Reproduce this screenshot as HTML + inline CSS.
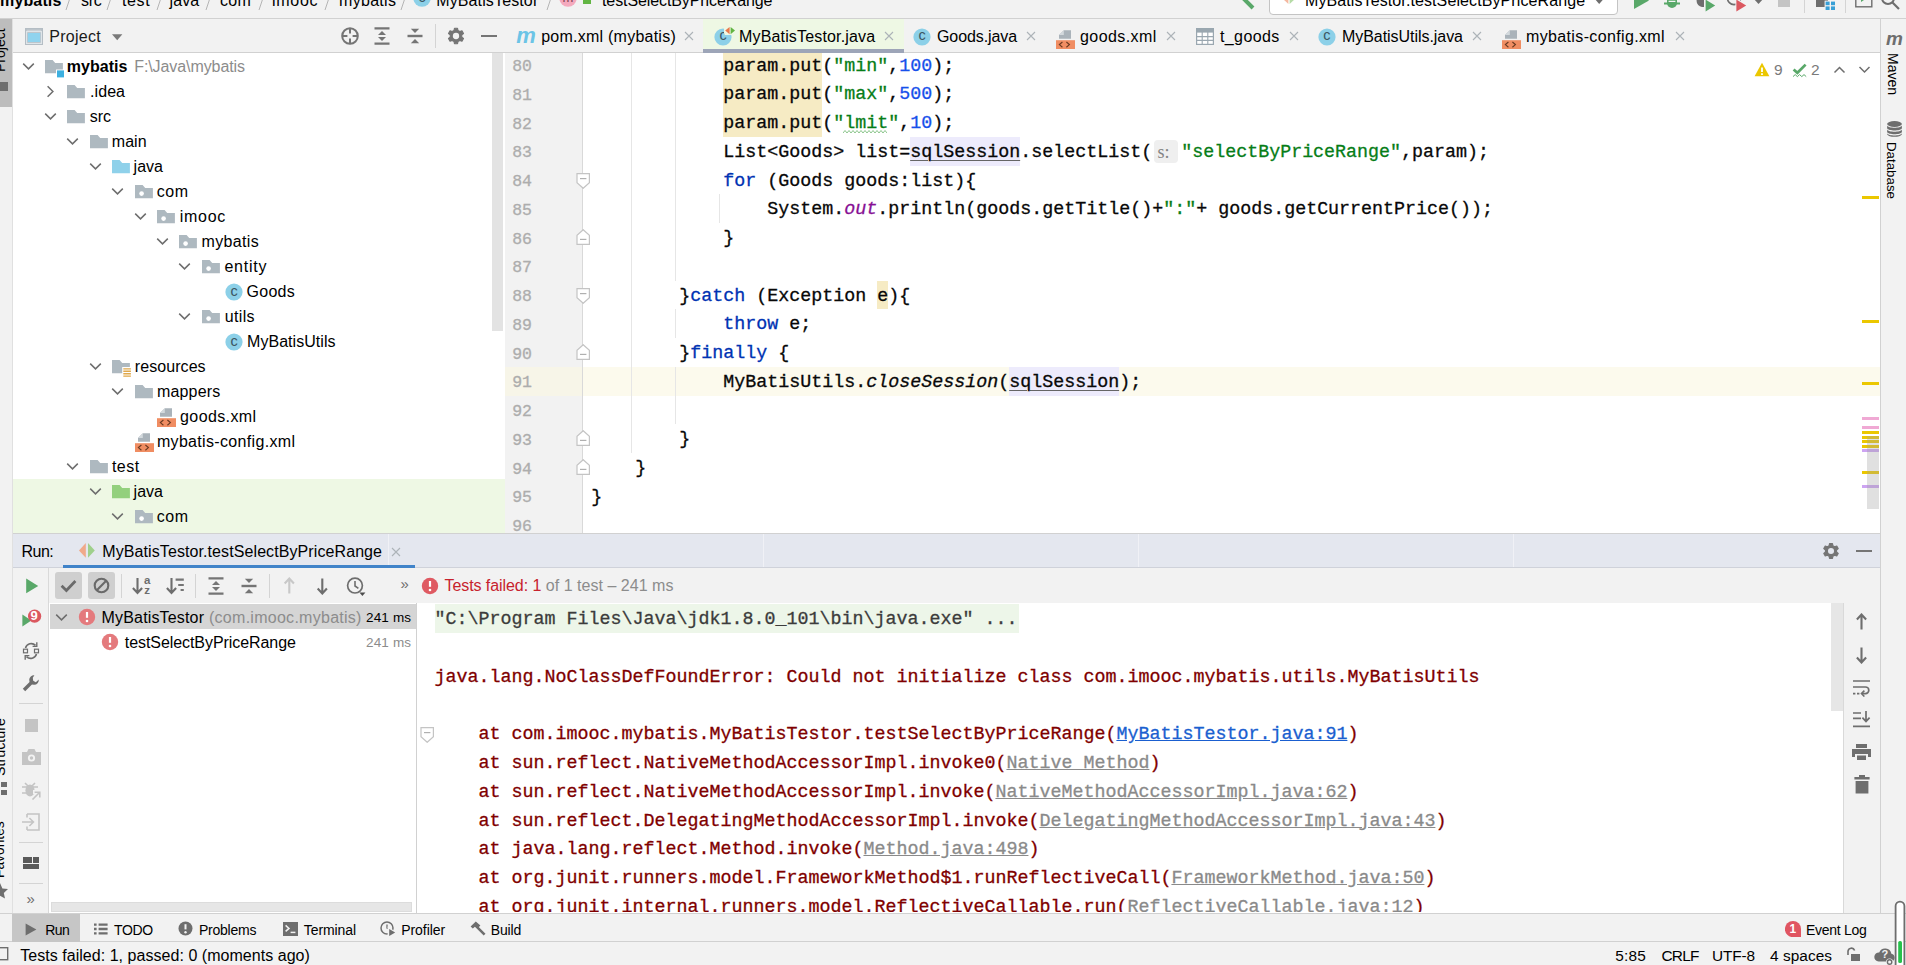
<!DOCTYPE html>
<html lang="en"><head><meta charset="utf-8"><title>mybatis – MyBatisTestor.java</title>
<style>
html,body{margin:0;padding:0;background:#f2f2f2;}
body{width:1906px;height:965px;overflow:hidden;position:relative;font-family:'Liberation Sans',sans-serif;}
#app{position:absolute;left:0;top:0;width:1906px;height:965px;overflow:hidden;}
#app div,#app svg,#app span,#app pre,#app a{position:absolute;}
.t{white-space:pre;line-height:1;}
pre{margin:0;font-family:'Liberation Mono',monospace;font-size:18.333px;line-height:28.75px;height:28.75px;white-space:pre;color:#080808;-webkit-text-stroke:0.3px currentColor;}
pre span, pre a, pre i{position:static !important;}
.k{color:#0033b3}.s{color:#067d17}.n{color:#1750eb}.f{color:#871094;font-style:italic}
.ln{color:#adadad;font-size:16.5px}
.e{color:#7f0000}
.lk{color:#1a5fd0;text-decoration:underline}.lg{color:#8a8a8a;text-decoration:underline}
u{text-decoration:underline;text-decoration-thickness:1px;text-underline-offset:3px;text-decoration-color:#666}
pre i{font-style:italic}
</style></head>
<body><div id="app">
<div style="left:0px;top:0px;width:1906px;height:18px;background:#f2f2f2;"></div>
<div style="left:0px;top:18px;width:1906px;height:1px;background:#d1d1d1;"></div>
<div style="left:0px;top:19px;width:13px;height:946px;background:#f2f2f2;"></div>
<div style="left:0px;top:19px;width:13px;height:88px;background:#bdbdbd;"></div>
<div style="left:13px;top:19px;width:492px;height:34px;background:#f2f2f2;"></div>
<div style="left:13px;top:52px;width:492px;height:1px;background:#d1d1d1;"></div>
<div style="left:13px;top:53px;width:492px;height:480px;background:#fff;"></div>
<div style="left:505px;top:19px;width:1375px;height:34px;background:#f2f2f2;"></div>
<div style="left:505px;top:52px;width:1375px;height:1px;background:#d1d1d1;"></div>
<div style="left:505px;top:53px;width:1375px;height:480px;background:#fff;"></div>
<div style="left:505px;top:53px;width:78px;height:480px;background:#f2f2f2;"></div>
<div style="left:582px;top:53px;width:1px;height:480px;background:#d9d9d9;"></div>
<div style="left:1880px;top:19px;width:1px;height:894px;background:#d1d1d1;"></div>
<div style="left:1881px;top:19px;width:25px;height:894px;background:#f2f2f2;"></div>
<div style="left:13px;top:534px;width:1867px;height:34px;background:#e4e7ef;"></div>
<div style="left:13px;top:533px;width:1867px;height:1px;background:#d1d1d1;"></div>
<div style="left:13px;top:567px;width:1867px;height:1px;background:#cfd2da;"></div>
<div style="left:13px;top:568px;width:1867px;height:35px;background:#f2f2f2;"></div>
<div style="left:49px;top:603px;width:1831px;height:1px;background:#dcdcdc;"></div>
<div style="left:13px;top:603px;width:36px;height:310px;background:#f2f2f2;"></div>
<div style="left:48px;top:568px;width:1px;height:345px;background:#d9d9d9;"></div>
<div style="left:49px;top:603px;width:368px;height:310px;background:#fff;"></div>
<div style="left:416px;top:603px;width:1px;height:310px;background:#d1d1d1;"></div>
<div style="left:417px;top:603px;width:1426px;height:310px;background:#fff;"></div>
<div style="left:1843px;top:603px;width:37px;height:310px;background:#f2f2f2;"></div>
<div style="left:1843px;top:603px;width:1px;height:310px;background:#d9d9d9;"></div>
<div style="left:0px;top:913px;width:1906px;height:1px;background:#d1d1d1;"></div>
<div style="left:0px;top:914px;width:1906px;height:28px;background:#f2f2f2;"></div>
<div style="left:0px;top:941px;width:1906px;height:1px;background:#d1d1d1;"></div>
<div style="left:0px;top:942px;width:1906px;height:23px;background:#f2f2f2;"></div>
<div style="left:12px;top:19px;width:1px;height:894px;background:#e0e0e0;"></div>
<div style="left:505px;top:366.7px;width:1375px;height:29.1px;background:#fcfaed;"></div>
<div style="left:505px;top:366.7px;width:78px;height:29.1px;background:#f7f5e8;"></div>
<div style="left:723px;top:53px;width:99px;height:83.7px;background:#f6ebc4;"></div>
<div style="left:910px;top:136.8px;width:110px;height:28.9px;background:#edebfc;"></div>
<div style="left:876.7px;top:281px;width:11.1px;height:27.6px;background:#f6ebc4;"></div>
<div style="left:1009px;top:366.7px;width:110px;height:29px;background:#edebfc;"></div>
<div style="left:631px;top:53px;width:1px;height:400px;background:#e6e6e6;"></div>
<div style="left:675px;top:53px;width:1px;height:227.5px;background:#e6e6e6;"></div>
<div style="left:675px;top:308.5px;width:1px;height:29px;background:#e6e6e6;"></div>
<div style="left:675px;top:367px;width:1px;height:57px;background:#e6e6e6;"></div>
<div style="left:719px;top:194px;width:1px;height:28.5px;background:#e6e6e6;"></div>
<div style="left:582px;top:53px;width:1px;height:480px;background:#d9d9d9;"></div>
<div id="editor" style="left:505px;top:53px;width:1375px;height:480px;overflow:hidden">
<pre class="ln" style="left:7.2px;top:0.20px">80</pre>
<pre style="left:86.2px;top:-0.40px">            param.put(<span class="s">"min"</span>,<span class="n">100</span>);</pre>
<pre class="ln" style="left:7.2px;top:28.95px">81</pre>
<pre style="left:86.2px;top:28.35px">            param.put(<span class="s">"max"</span>,<span class="n">500</span>);</pre>
<pre class="ln" style="left:7.2px;top:57.70px">82</pre>
<pre style="left:86.2px;top:57.10px">            param.put(<span class="s">"lmit"</span>,<span class="n">10</span>);</pre>
<pre class="ln" style="left:7.2px;top:86.45px">83</pre>
<pre style="left:86.2px;top:85.85px">            List&lt;Goods&gt; list=<u>sqlSession</u>.selectList(<span style="display:inline-block;width:29px"></span><span class="s">"selectByPriceRange"</span>,param);</pre>
<pre class="ln" style="left:7.2px;top:115.20px">84</pre>
<pre style="left:86.2px;top:114.60px">            <span class="k">for</span> (Goods goods:list){</pre>
<pre class="ln" style="left:7.2px;top:143.95px">85</pre>
<pre style="left:86.2px;top:143.35px">                System.<span class="f">out</span>.println(goods.getTitle()+<span class="s">":"</span>+ goods.getCurrentPrice());</pre>
<pre class="ln" style="left:7.2px;top:172.70px">86</pre>
<pre style="left:86.2px;top:172.10px">            }</pre>
<pre class="ln" style="left:7.2px;top:201.45px">87</pre>
<pre class="ln" style="left:7.2px;top:230.20px">88</pre>
<pre style="left:86.2px;top:229.60px">        }<span class="k">catch</span> (Exception e){</pre>
<pre class="ln" style="left:7.2px;top:258.95px">89</pre>
<pre style="left:86.2px;top:258.35px">            <span class="k">throw</span> e;</pre>
<pre class="ln" style="left:7.2px;top:287.70px">90</pre>
<pre style="left:86.2px;top:287.10px">        }<span class="k">finally</span> {</pre>
<pre class="ln" style="left:7.2px;top:316.45px">91</pre>
<pre style="left:86.2px;top:315.85px">            MyBatisUtils.<i>closeSession</i>(<u>sqlSession</u>);</pre>
<pre class="ln" style="left:7.2px;top:345.20px">92</pre>
<pre class="ln" style="left:7.2px;top:373.95px">93</pre>
<pre style="left:86.2px;top:373.35px">        }</pre>
<pre class="ln" style="left:7.2px;top:402.70px">94</pre>
<pre style="left:86.2px;top:402.10px">    }</pre>
<pre class="ln" style="left:7.2px;top:431.45px">95</pre>
<pre style="left:86.2px;top:430.85px">}</pre>
<pre class="ln" style="left:7.2px;top:460.20px">96</pre>
</div>
<svg style="left:843px;top:130px;" width="44" height="4" viewBox="0 0 44 4"><path d="M0 3l2-2.5 2 2.5 2-2.5 2 2.5 2-2.5 2 2.5 2-2.5 2 2.5 2-2.5 2 2.5 2-2.5 2 2.5 2-2.5 2 2.5 2-2.5 2 2.5 2-2.5 2 2.5 2-2.5 2 2.5 2-2.5 2 2.5" fill="none" stroke="#7fbf7f" stroke-width="0.9"/></svg>
<div style="left:1154px;top:140px;width:24px;height:23px;background:#efefef;border-radius:4px"></div>
<span class="t" style="left:1157.6px;top:143.0px;font-size:18px;color:#848484;font-family:'Liberation Serif',serif;">s:</span>
<svg style="left:575.5px;top:172.70000000000002px;" width="15" height="16" viewBox="0 0 15 16"><path d="M1 .7h12.4v9l-6.2 5.6-6.2-5.6z" fill="#fff" stroke="#c4c4c4" stroke-width="1.2"/><path d="M4 5.6h6.4" stroke="#b0b0b0" stroke-width="1.2"/></svg>
<svg style="left:575.5px;top:287.7px;" width="15" height="16" viewBox="0 0 15 16"><path d="M1 .7h12.4v9l-6.2 5.6-6.2-5.6z" fill="#fff" stroke="#c4c4c4" stroke-width="1.2"/><path d="M4 5.6h6.4" stroke="#b0b0b0" stroke-width="1.2"/></svg>
<svg style="left:575.5px;top:229.20000000000002px;" width="15" height="16" viewBox="0 0 15 16"><path d="M1 15.3h12.4v-9l-6.2-5.6-6.2 5.6z" fill="#fff" stroke="#c4c4c4" stroke-width="1.2"/><path d="M4 10.4h6.4" stroke="#b0b0b0" stroke-width="1.2"/></svg>
<svg style="left:575.5px;top:344.2px;" width="15" height="16" viewBox="0 0 15 16"><path d="M1 15.3h12.4v-9l-6.2-5.6-6.2 5.6z" fill="#fff" stroke="#c4c4c4" stroke-width="1.2"/><path d="M4 10.4h6.4" stroke="#b0b0b0" stroke-width="1.2"/></svg>
<svg style="left:575.5px;top:430.45px;" width="15" height="16" viewBox="0 0 15 16"><path d="M1 15.3h12.4v-9l-6.2-5.6-6.2 5.6z" fill="#fff" stroke="#c4c4c4" stroke-width="1.2"/><path d="M4 10.4h6.4" stroke="#b0b0b0" stroke-width="1.2"/></svg>
<svg style="left:575.5px;top:459.2px;" width="15" height="16" viewBox="0 0 15 16"><path d="M1 15.3h12.4v-9l-6.2-5.6-6.2 5.6z" fill="#fff" stroke="#c4c4c4" stroke-width="1.2"/><path d="M4 10.4h6.4" stroke="#b0b0b0" stroke-width="1.2"/></svg>
<svg style="left:1754px;top:62px;" width="16" height="15" viewBox="0 0 16 15"><path d="M8 .8L15.4 14.3H.6z" fill="#ebc700"/><path d="M7.1 5.5h1.8v4.6H7.1zM7.1 11.2h1.8V13H7.1z" fill="#fff"/></svg>
<span class="t" style="left:1774.0px;top:62.4px;font-size:15.5px;color:#7a7a7a;">9</span>
<svg style="left:1792px;top:62px;" width="16" height="16" viewBox="0 0 16 16"><path d="M1.6 7.4l3.8 3.4L13.6 2.6" fill="none" stroke="#59a869" stroke-width="2.7"/><path d="M1 14.6l2.2-2 2.2 2 2.2-2 2.2 2 2.2-2 2.2 2" fill="none" stroke="#59a869" stroke-width="1"/></svg>
<span class="t" style="left:1811.0px;top:62.4px;font-size:15.5px;color:#7a7a7a;">2</span>
<svg style="left:1833px;top:64px;" width="13" height="11" viewBox="0 0 13 11"><path d="M1.5 8.5l5-5 5 5" fill="none" stroke="#6e6e6e" stroke-width="1.5"/></svg>
<svg style="left:1858px;top:64px;" width="13" height="11" viewBox="0 0 13 11"><path d="M1.5 3l5 5 5-5" fill="none" stroke="#6e6e6e" stroke-width="1.5"/></svg>
<div style="left:1862px;top:195.8px;width:17px;height:3px;background:#ebc700;"></div>
<div style="left:1862px;top:319.5px;width:17px;height:3px;background:#ebc700;"></div>
<div style="left:1862px;top:382px;width:17px;height:3px;background:#ebc700;"></div>
<div style="left:1862px;top:417.2px;width:17px;height:3px;background:#f0a9d4;"></div>
<div style="left:1862px;top:426px;width:17px;height:3px;background:#f0a9d4;"></div>
<div style="left:1862px;top:431px;width:17px;height:3px;background:#ebc700;"></div>
<div style="left:1862px;top:435.8px;width:17px;height:3px;background:#ebc700;"></div>
<div style="left:1862px;top:439.7px;width:17px;height:3px;background:#ebc700;"></div>
<div style="left:1862px;top:444.6px;width:17px;height:3px;background:#ebc700;"></div>
<div style="left:1862px;top:448.6px;width:17px;height:3px;background:#cda4f2;"></div>
<div style="left:1862px;top:471px;width:17px;height:3px;background:#ebc700;"></div>
<div style="left:1862px;top:484.7px;width:17px;height:3px;background:#cda4f2;"></div>
<div style="left:1867px;top:436px;width:12px;height:73px;background:rgba(160,160,160,.33);"></div>
<svg style="left:25px;top:28px;" width="18" height="17" viewBox="0 0 18 17"><rect x="0" y="0" width="18" height="17" fill="#b4bdc4"/><rect x="1.6" y="1.6" width="14.8" height="2" fill="#c9d0d5"/><rect x="2.8" y="5" width="12.4" height="9" fill="#8fd3ee"/><rect x="1.6" y="3.6" width="14.8" height="11.8" fill="none" stroke="#dfe5e9" stroke-width="1.2"/></svg>
<span class="t" style="left:49.2px;top:29.0px;font-size:16px;color:#1a1a1a;letter-spacing:0.29px;">Project</span>
<svg style="left:112px;top:34px;" width="11" height="7" viewBox="0 0 11 7"><path d="M0 .3h10.4L5.2 6.3z" fill="#7a7a7a"/></svg>
<svg style="left:340px;top:26px;" width="20" height="20" viewBox="0 0 20 20"><circle cx="10" cy="10" r="7.8" fill="none" stroke="#757575" stroke-width="2"/><path d="M10 2v5.4M10 12.6v5.4M2 10h5.4M12.6 10h5.4" stroke="#757575" stroke-width="2"/></svg>
<svg style="left:373px;top:26px;" width="18" height="20" viewBox="0 0 18 20"><path d="M1.5 2.4h15M1.5 17.6h15" stroke="#757575" stroke-width="2.4"/><path d="M9 5l4 4H5zM9 15l4-4H5z" fill="#757575"/></svg>
<svg style="left:406px;top:26px;" width="18" height="20" viewBox="0 0 18 20"><path d="M1.5 10h15" stroke="#757575" stroke-width="2.4"/><path d="M9 7l4.2-4.2H4.8zM9 13l4.2 4.2H4.8z" fill="#757575"/></svg>
<div style="left:435px;top:24px;width:1px;height:24px;background:#d4d4d4;"></div>
<svg style="left:445.7px;top:26px;" width="20" height="20" viewBox="0 0 20 20"><g transform="translate(10 10)"><polygon points="-1.90,-5.53 -1.51,-7.75 1.51,-7.75 1.90,-5.53 3.84,-4.41 5.96,-5.18 7.47,-2.57 5.74,-1.12 5.74,1.12 7.47,2.57 5.96,5.18 3.84,4.41 1.90,5.53 1.51,7.75 -1.51,7.75 -1.90,5.53 -3.84,4.41 -5.96,5.18 -7.47,2.57 -5.74,1.12 -5.74,-1.12 -7.47,-2.57 -5.96,-5.18 -3.84,-4.41" fill="#757575" stroke="#757575" stroke-width="1.2" stroke-linejoin="round"/><circle r="3.16" fill="#f2f2f2"/></g></svg>
<div style="left:481px;top:34.9px;width:15.6px;height:2.2px;background:#757575;"></div>
<div style="left:492px;top:53px;width:11px;height:278px;background:#e3e3e3;"></div>
<div style="left:13px;top:479px;width:492px;height:54px;background:#eef8e4;"></div>
<div id="tree" style="left:0;top:53px;width:505px;height:480px;overflow:hidden">
<svg style="left:21.5px;top:9.0px;" width="13" height="9" viewBox="0 0 13 9"><path d="M1.2 1.6l5.3 5.3 5.3-5.3" fill="none" stroke="#6e6e6e" stroke-width="1.5"/></svg>
<svg style="left:45.0px;top:6.6px;" width="20" height="19" viewBox="0 0 20 19"><path d="M0 0h7.6l2.6 3H17.9V13.3H0z" fill="#aeb9c0"/><rect x="11" y="9.5" width="8" height="8" fill="#fff"/><rect x="12" y="10.4" width="7" height="7" fill="#3db0e0"/></svg>
<span class="t" style="left:66.8px;top:5.8px;font-size:16px;color:#000;font-weight:700;letter-spacing:0.02px;">mybatis</span>
<span class="t" style="left:134.2px;top:5.8px;font-size:16px;color:#8c8c8c;letter-spacing:-0.08px;">F:\Java\mybatis</span>
<svg style="left:45.9px;top:32.0px;" width="9" height="13" viewBox="0 0 9 13"><path d="M1.6 1.2l5.3 5.3-5.3 5.3" fill="none" stroke="#6e6e6e" stroke-width="1.5"/></svg>
<svg style="left:67.4px;top:31.6px;" width="20" height="19" viewBox="0 0 20 19"><path d="M0 0h7.6l2.6 3H17.9V13.3H0z" fill="#aeb9c0"/></svg>
<span class="t" style="left:90.0px;top:30.8px;font-size:16px;color:#000;letter-spacing:0.08px;">.idea</span>
<svg style="left:43.9px;top:59.0px;" width="13" height="9" viewBox="0 0 13 9"><path d="M1.2 1.6l5.3 5.3 5.3-5.3" fill="none" stroke="#6e6e6e" stroke-width="1.5"/></svg>
<svg style="left:67.4px;top:56.6px;" width="20" height="19" viewBox="0 0 20 19"><path d="M0 0h7.6l2.6 3H17.9V13.3H0z" fill="#aeb9c0"/></svg>
<span class="t" style="left:89.8px;top:55.8px;font-size:16px;color:#000;letter-spacing:-0.01px;">src</span>
<svg style="left:66.3px;top:84.0px;" width="13" height="9" viewBox="0 0 13 9"><path d="M1.2 1.6l5.3 5.3 5.3-5.3" fill="none" stroke="#6e6e6e" stroke-width="1.5"/></svg>
<svg style="left:89.8px;top:81.6px;" width="20" height="19" viewBox="0 0 20 19"><path d="M0 0h7.6l2.6 3H17.9V13.3H0z" fill="#aeb9c0"/></svg>
<span class="t" style="left:111.8px;top:80.8px;font-size:16px;color:#000;letter-spacing:0.05px;">main</span>
<svg style="left:88.69999999999999px;top:109.0px;" width="13" height="9" viewBox="0 0 13 9"><path d="M1.2 1.6l5.3 5.3 5.3-5.3" fill="none" stroke="#6e6e6e" stroke-width="1.5"/></svg>
<svg style="left:112.19999999999999px;top:106.6px;" width="20" height="19" viewBox="0 0 20 19"><path d="M0 0h7.6l2.6 3H17.9V13.3H0z" fill="#8fd1ea"/></svg>
<span class="t" style="left:133.6px;top:105.8px;font-size:16px;color:#000;letter-spacing:-0.01px;">java</span>
<svg style="left:111.1px;top:134.0px;" width="13" height="9" viewBox="0 0 13 9"><path d="M1.2 1.6l5.3 5.3 5.3-5.3" fill="none" stroke="#6e6e6e" stroke-width="1.5"/></svg>
<svg style="left:134.6px;top:131.6px;" width="20" height="19" viewBox="0 0 20 19"><path d="M0 0h7.6l2.6 3H17.9V13.3H0z" fill="#aeb9c0"/><circle cx="6.6" cy="8.6" r="2.3" fill="#fff"/></svg>
<span class="t" style="left:156.8px;top:130.8px;font-size:16px;color:#000;letter-spacing:0.56px;">com</span>
<svg style="left:133.5px;top:159.0px;" width="13" height="9" viewBox="0 0 13 9"><path d="M1.2 1.6l5.3 5.3 5.3-5.3" fill="none" stroke="#6e6e6e" stroke-width="1.5"/></svg>
<svg style="left:157.0px;top:156.6px;" width="20" height="19" viewBox="0 0 20 19"><path d="M0 0h7.6l2.6 3H17.9V13.3H0z" fill="#aeb9c0"/><circle cx="6.6" cy="8.6" r="2.3" fill="#fff"/></svg>
<span class="t" style="left:179.7px;top:155.8px;font-size:16px;color:#000;letter-spacing:0.72px;">imooc</span>
<svg style="left:155.89999999999998px;top:184.0px;" width="13" height="9" viewBox="0 0 13 9"><path d="M1.2 1.6l5.3 5.3 5.3-5.3" fill="none" stroke="#6e6e6e" stroke-width="1.5"/></svg>
<svg style="left:179.39999999999998px;top:181.6px;" width="20" height="19" viewBox="0 0 20 19"><path d="M0 0h7.6l2.6 3H17.9V13.3H0z" fill="#aeb9c0"/><circle cx="6.6" cy="8.6" r="2.3" fill="#fff"/></svg>
<span class="t" style="left:201.6px;top:180.8px;font-size:16px;color:#000;letter-spacing:0.33px;">mybatis</span>
<svg style="left:178.29999999999998px;top:209.0px;" width="13" height="9" viewBox="0 0 13 9"><path d="M1.2 1.6l5.3 5.3 5.3-5.3" fill="none" stroke="#6e6e6e" stroke-width="1.5"/></svg>
<svg style="left:201.79999999999998px;top:206.6px;" width="20" height="19" viewBox="0 0 20 19"><path d="M0 0h7.6l2.6 3H17.9V13.3H0z" fill="#aeb9c0"/><circle cx="6.6" cy="8.6" r="2.3" fill="#fff"/></svg>
<span class="t" style="left:224.4px;top:205.8px;font-size:16px;color:#000;letter-spacing:0.79px;">entity</span>
<svg style="left:225.1px;top:230.2px;" width="18" height="18" viewBox="0 0 18 18"><circle cx="9" cy="9" r="8.6" fill="#8cd0e8"/></svg>
<span class="t" style="left:230.6px;top:231.0px;font-size:14.5px;color:#3b5663;">c</span>
<span class="t" style="left:246.6px;top:230.8px;font-size:16px;color:#000;letter-spacing:0.23px;">Goods</span>
<svg style="left:178.29999999999998px;top:259.0px;" width="13" height="9" viewBox="0 0 13 9"><path d="M1.2 1.6l5.3 5.3 5.3-5.3" fill="none" stroke="#6e6e6e" stroke-width="1.5"/></svg>
<svg style="left:201.79999999999998px;top:256.6px;" width="20" height="19" viewBox="0 0 20 19"><path d="M0 0h7.6l2.6 3H17.9V13.3H0z" fill="#aeb9c0"/><circle cx="6.6" cy="8.6" r="2.3" fill="#fff"/></svg>
<span class="t" style="left:224.8px;top:255.8px;font-size:16px;color:#000;letter-spacing:0.33px;">utils</span>
<svg style="left:225.1px;top:280.2px;" width="18" height="18" viewBox="0 0 18 18"><circle cx="9" cy="9" r="8.6" fill="#8cd0e8"/></svg>
<span class="t" style="left:230.6px;top:281.0px;font-size:14.5px;color:#3b5663;">c</span>
<span class="t" style="left:247.0px;top:280.8px;font-size:16px;color:#000;letter-spacing:0.05px;">MyBatisUtils</span>
<svg style="left:88.69999999999999px;top:309.0px;" width="13" height="9" viewBox="0 0 13 9"><path d="M1.2 1.6l5.3 5.3 5.3-5.3" fill="none" stroke="#6e6e6e" stroke-width="1.5"/></svg>
<svg style="left:112.19999999999999px;top:306.6px;" width="20" height="19" viewBox="0 0 20 19"><path d="M0 0h7.6l2.6 3H17.9V13.3H0z" fill="#aeb9c0"/><rect x="10.2" y="7" width="9" height="11" fill="#fff"/><path d="M11.3 8.9h7.6M11.3 11.3h7.6M11.3 13.7h7.6M11.3 16.1h7.6" stroke="#e0a84a" stroke-width="1.4"/></svg>
<span class="t" style="left:134.8px;top:305.8px;font-size:16px;color:#000;letter-spacing:0.07px;">resources</span>
<svg style="left:111.1px;top:334.0px;" width="13" height="9" viewBox="0 0 13 9"><path d="M1.2 1.6l5.3 5.3 5.3-5.3" fill="none" stroke="#6e6e6e" stroke-width="1.5"/></svg>
<svg style="left:134.6px;top:331.6px;" width="20" height="19" viewBox="0 0 20 19"><path d="M0 0h7.6l2.6 3H17.9V13.3H0z" fill="#aeb9c0"/></svg>
<span class="t" style="left:156.9px;top:330.8px;font-size:16px;color:#000;letter-spacing:0.18px;">mappers</span>
<svg style="left:157.0px;top:355px;" width="20" height="19.4" viewBox="0 0 20 19.4"><path d="M7.8 .2H15v8.6H3V5z" fill="#aab3ba"/><path d="M3 5L7.8 .2V5z" fill="#d3d9dd"/><rect x="0" y="10.2" width="19" height="8.8" fill="#f08d62"/><path d="M6.4 12l-3 2.6 3 2.6M10.4 12l3 2.6-3 2.6" fill="none" stroke="#6b3a22" stroke-width="1.15"/></svg>
<span class="t" style="left:180.1px;top:355.8px;font-size:16px;color:#000;letter-spacing:0.38px;">goods.xml</span>
<svg style="left:134.6px;top:380px;" width="20" height="19.4" viewBox="0 0 20 19.4"><path d="M7.8 .2H15v8.6H3V5z" fill="#aab3ba"/><path d="M3 5L7.8 .2V5z" fill="#d3d9dd"/><rect x="0" y="10.2" width="19" height="8.8" fill="#f08d62"/><path d="M6.4 12l-3 2.6 3 2.6M10.4 12l3 2.6-3 2.6" fill="none" stroke="#6b3a22" stroke-width="1.15"/></svg>
<span class="t" style="left:156.9px;top:380.8px;font-size:16px;color:#000;letter-spacing:0.33px;">mybatis-config.xml</span>
<svg style="left:66.3px;top:409.0px;" width="13" height="9" viewBox="0 0 13 9"><path d="M1.2 1.6l5.3 5.3 5.3-5.3" fill="none" stroke="#6e6e6e" stroke-width="1.5"/></svg>
<svg style="left:89.8px;top:406.6px;" width="20" height="19" viewBox="0 0 20 19"><path d="M0 0h7.6l2.6 3H17.9V13.3H0z" fill="#aeb9c0"/></svg>
<span class="t" style="left:111.9px;top:405.8px;font-size:16px;color:#000;letter-spacing:0.53px;">test</span>
<svg style="left:88.69999999999999px;top:434.0px;" width="13" height="9" viewBox="0 0 13 9"><path d="M1.2 1.6l5.3 5.3 5.3-5.3" fill="none" stroke="#6e6e6e" stroke-width="1.5"/></svg>
<svg style="left:112.19999999999999px;top:431.6px;" width="20" height="19" viewBox="0 0 20 19"><path d="M0 0h7.6l2.6 3H17.9V13.3H0z" fill="#93d07d"/></svg>
<span class="t" style="left:133.6px;top:430.8px;font-size:16px;color:#000;letter-spacing:-0.01px;">java</span>
<svg style="left:111.1px;top:459.0px;" width="13" height="9" viewBox="0 0 13 9"><path d="M1.2 1.6l5.3 5.3 5.3-5.3" fill="none" stroke="#6e6e6e" stroke-width="1.5"/></svg>
<svg style="left:134.6px;top:456.6px;" width="20" height="19" viewBox="0 0 20 19"><path d="M0 0h7.6l2.6 3H17.9V13.3H0z" fill="#aeb9c0"/><circle cx="6.6" cy="8.6" r="2.3" fill="#fff"/></svg>
<span class="t" style="left:156.8px;top:455.8px;font-size:16px;color:#000;letter-spacing:0.56px;">com</span>
</div>
<div style="left:703px;top:19px;width:201px;height:33px;background:#eef8e4;"></div>
<div style="left:703px;top:49px;width:201px;height:4px;background:#9da5b8;"></div>
<span class="t" style="left:516.3px;top:24.9px;font-size:22px;color:#6cc4e6;font-weight:700;font-style:italic;letter-spacing:-0.36px;">m</span>
<span class="t" style="left:541.2px;top:28.6px;font-size:16px;color:#000;letter-spacing:0.24px;">pom.xml (mybatis)</span>
<svg style="left:684px;top:30.700000000000003px;" width="10" height="10" viewBox="0 0 10 10"><path d="M1 1l8 8M9 1l-8 8" stroke="#adb3b8" stroke-width="1.1"/></svg>
<svg style="left:714px;top:27.5px;" width="18" height="18" viewBox="0 0 18 18"><circle cx="9" cy="9" r="8.6" fill="#8cd0e8"/></svg>
<span class="t" style="left:719.5px;top:28.3px;font-size:14.5px;color:#3b5663;">c</span>
<svg style="left:724px;top:25.5px;" width="12" height="9.5" viewBox="0 0 12 9.5"><rect x="0" y="0" width="12" height="9.5" rx="3" fill="#eef8e4"/><path d="M5.6 1L1.2 4.6 5.6 8.2z" fill="#e8794a"/><path d="M6.6 1l4.4 3.6-4.4 3.6z" fill="#62b543"/></svg>
<span class="t" style="left:739.0px;top:28.6px;font-size:16px;color:#000;letter-spacing:0.16px;">MyBatisTestor.java</span>
<svg style="left:884px;top:30.700000000000003px;" width="10" height="10" viewBox="0 0 10 10"><path d="M1 1l8 8M9 1l-8 8" stroke="#adb3b8" stroke-width="1.1"/></svg>
<svg style="left:913px;top:27.5px;" width="18" height="18" viewBox="0 0 18 18"><circle cx="9" cy="9" r="8.6" fill="#8cd0e8"/></svg>
<span class="t" style="left:918.5px;top:28.3px;font-size:14.5px;color:#3b5663;">c</span>
<span class="t" style="left:937.0px;top:28.6px;font-size:16px;color:#000;letter-spacing:-0.09px;">Goods.java</span>
<svg style="left:1026px;top:30.700000000000003px;" width="10" height="10" viewBox="0 0 10 10"><path d="M1 1l8 8M9 1l-8 8" stroke="#adb3b8" stroke-width="1.1"/></svg>
<svg style="left:1056px;top:29.5px;" width="20" height="19.4" viewBox="0 0 20 19.4"><path d="M7.8 .2H15v8.6H3V5z" fill="#aab3ba"/><path d="M3 5L7.8 .2V5z" fill="#d3d9dd"/><rect x="0" y="10.2" width="19" height="8.8" fill="#f08d62"/><path d="M6.4 12l-3 2.6 3 2.6M10.4 12l3 2.6-3 2.6" fill="none" stroke="#6b3a22" stroke-width="1.15"/></svg>
<span class="t" style="left:1080.0px;top:28.6px;font-size:16px;color:#000;letter-spacing:0.43px;">goods.xml</span>
<svg style="left:1166px;top:30.700000000000003px;" width="10" height="10" viewBox="0 0 10 10"><path d="M1 1l8 8M9 1l-8 8" stroke="#adb3b8" stroke-width="1.1"/></svg>
<svg style="left:1196px;top:28px;" width="18" height="17" viewBox="0 0 18 17"><rect x=".6" y=".6" width="16.8" height="15.8" fill="#fff" stroke="#9aa7b0" stroke-width="1.2"/><rect x=".6" y=".6" width="16.8" height="4" fill="#9aa7b0"/><path d="M.6 8.6h16.8M.6 12.4h16.8M6.2 4v12.4M11.8 4v12.4" stroke="#9aa7b0" stroke-width="1.1"/></svg>
<span class="t" style="left:1220.0px;top:28.6px;font-size:16px;color:#000;letter-spacing:0.39px;">t_goods</span>
<svg style="left:1289px;top:30.700000000000003px;" width="10" height="10" viewBox="0 0 10 10"><path d="M1 1l8 8M9 1l-8 8" stroke="#adb3b8" stroke-width="1.1"/></svg>
<svg style="left:1317.7px;top:27.5px;" width="18" height="18" viewBox="0 0 18 18"><circle cx="9" cy="9" r="8.6" fill="#8cd0e8"/></svg>
<span class="t" style="left:1323.2px;top:28.3px;font-size:14.5px;color:#3b5663;">c</span>
<span class="t" style="left:1342.0px;top:28.6px;font-size:16px;color:#000;letter-spacing:-0.05px;">MyBatisUtils.java</span>
<svg style="left:1472px;top:30.700000000000003px;" width="10" height="10" viewBox="0 0 10 10"><path d="M1 1l8 8M9 1l-8 8" stroke="#adb3b8" stroke-width="1.1"/></svg>
<svg style="left:1502px;top:29.5px;" width="20" height="19.4" viewBox="0 0 20 19.4"><path d="M7.8 .2H15v8.6H3V5z" fill="#aab3ba"/><path d="M3 5L7.8 .2V5z" fill="#d3d9dd"/><rect x="0" y="10.2" width="19" height="8.8" fill="#f08d62"/><path d="M6.4 12l-3 2.6 3 2.6M10.4 12l3 2.6-3 2.6" fill="none" stroke="#6b3a22" stroke-width="1.15"/></svg>
<span class="t" style="left:1526.0px;top:28.6px;font-size:16px;color:#000;letter-spacing:0.36px;">mybatis-config.xml</span>
<svg style="left:1675px;top:30.700000000000003px;" width="10" height="10" viewBox="0 0 10 10"><path d="M1 1l8 8M9 1l-8 8" stroke="#adb3b8" stroke-width="1.1"/></svg>
<div id="nav" style="left:0;top:0;width:1906px;height:18px;overflow:hidden">
<span class="t" style="left:0.0px;top:-7.1px;font-size:16px;color:#000;font-weight:700;letter-spacing:0.15px;">mybatis</span>
<span class="t" style="left:81.0px;top:-7.1px;font-size:16px;color:#000;letter-spacing:-0.34px;">src</span>
<span class="t" style="left:122.0px;top:-7.1px;font-size:16px;color:#000;letter-spacing:0.63px;">test</span>
<span class="t" style="left:169.6px;top:-7.1px;font-size:16px;color:#000;letter-spacing:0.09px;">java</span>
<span class="t" style="left:220.0px;top:-7.1px;font-size:16px;color:#000;letter-spacing:0.36px;">com</span>
<span class="t" style="left:272.0px;top:-7.1px;font-size:16px;color:#000;letter-spacing:0.72px;">imooc</span>
<span class="t" style="left:339.0px;top:-7.1px;font-size:16px;color:#000;letter-spacing:0.31px;">mybatis</span>
<span class="t" style="left:436.2px;top:-7.1px;font-size:16px;color:#000;letter-spacing:0.13px;">MyBatisTestor</span>
<span class="t" style="left:602.0px;top:-7.1px;font-size:16px;color:#000;letter-spacing:-0.10px;">testSelectByPriceRange</span>
<svg style="left:65px;top:-8px;" width="8" height="18" viewBox="0 0 8 18"><path d="M7 0L1 18" stroke="#b4b4b4" stroke-width="1"/></svg>
<svg style="left:106px;top:-8px;" width="8" height="18" viewBox="0 0 8 18"><path d="M7 0L1 18" stroke="#b4b4b4" stroke-width="1"/></svg>
<svg style="left:156px;top:-8px;" width="8" height="18" viewBox="0 0 8 18"><path d="M7 0L1 18" stroke="#b4b4b4" stroke-width="1"/></svg>
<svg style="left:205px;top:-8px;" width="8" height="18" viewBox="0 0 8 18"><path d="M7 0L1 18" stroke="#b4b4b4" stroke-width="1"/></svg>
<svg style="left:258px;top:-8px;" width="8" height="18" viewBox="0 0 8 18"><path d="M7 0L1 18" stroke="#b4b4b4" stroke-width="1"/></svg>
<svg style="left:324px;top:-8px;" width="8" height="18" viewBox="0 0 8 18"><path d="M7 0L1 18" stroke="#b4b4b4" stroke-width="1"/></svg>
<svg style="left:400px;top:-8px;" width="8" height="18" viewBox="0 0 8 18"><path d="M7 0L1 18" stroke="#b4b4b4" stroke-width="1"/></svg>
<svg style="left:546px;top:-8px;" width="8" height="18" viewBox="0 0 8 18"><path d="M7 0L1 18" stroke="#b4b4b4" stroke-width="1"/></svg>
<svg style="left:413px;top:-11px;" width="18" height="18" viewBox="0 0 18 18"><circle cx="9" cy="9" r="8.7" fill="#8cd0e8"/></svg>
<span class="t" style="left:418.4px;top:-10.1px;font-size:14.5px;color:#3b5663;">c</span>
<svg style="left:558.5px;top:-11px;" width="18" height="18" viewBox="0 0 18 18"><circle cx="9" cy="9" r="8.7" fill="#f4a9bd"/></svg>
<span class="t" style="left:562.4px;top:-9.4px;font-size:13px;color:#7a3f52;">m</span>
<div style="left:583px;top:0px;width:8px;height:4.4px;background:#62b543;"></div>
<svg style="left:1236px;top:-6px;" width="22" height="16" viewBox="0 0 22 16"><path d="M3 0l14 14" stroke="#59a869" stroke-width="4"/></svg>
<div style="left:1269px;top:-8px;width:347px;height:21px;background:#fff;border:1px solid #c4c4c4;border-radius:4px"></div>
<svg style="left:1283px;top:-6px;" width="12" height="11" viewBox="0 0 12 11"><path d="M5.4 0L0 5 5.4 10z" fill="#f4b8a0"/><path d="M6.6 0L12 5 6.6 10z" fill="#b5dba6"/></svg>
<span class="t" style="left:1305.0px;top:-7.1px;font-size:16px;color:#000;letter-spacing:0.10px;">MyBatisTestor.testSelectByPriceRange</span>
<svg style="left:1594px;top:-2px;" width="11" height="7" viewBox="0 0 11 7"><path d="M0 0h10.4L5.2 6z" fill="#6e6e6e"/></svg>
<svg style="left:1632px;top:-8px;" width="18" height="18" viewBox="0 0 18 18"><path d="M2 0l15 8.5L2 17z" fill="#59a869"/></svg>
<svg style="left:1664px;top:-8px;" width="16" height="18" viewBox="0 0 16 18"><path d="M3 0h10v11a5 5 0 0 1-10 0z" fill="#59a869"/><path d="M0 6.4h16M0 11.6h16" stroke="#59a869" stroke-width="2"/><path d="M4.6 5.6h6.8M4.6 9.4h6.8" stroke="#f2f2f2" stroke-width="1.3"/></svg>
<svg style="left:1696px;top:-6px;" width="20" height="18" viewBox="0 0 20 18"><path d="M8 0v13H6a6 6 0 0 1-5.4-6V0z" fill="#6e6e6e"/><path d="M9.6 5.6l9.6 6-9.6 6z" fill="#59a869"/></svg>
<svg style="left:1726px;top:-6px;" width="22" height="18" viewBox="0 0 22 18"><circle cx="8" cy="4" r="6.6" fill="none" stroke="#6e6e6e" stroke-width="1.6"/><path d="M8 4.4l3.4-3.8" stroke="#6e6e6e" stroke-width="1.4"/><path d="M9 5.4h4l8 6-11 6z" fill="#f2f2f2"/><path d="M10.4 5.6l9.8 6-9.8 6z" fill="#db5860"/></svg>
<svg style="left:1753px;top:-2px;" width="12" height="7" viewBox="0 0 12 7"><path d="M0 0h11L5.5 6z" fill="#6e6e6e"/></svg>
<div style="left:1778px;top:-4px;width:12px;height:11px;background:#c4c4c4;"></div>
<div style="left:1804px;top:0px;width:1px;height:13px;background:#d4d4d4;"></div>
<svg style="left:1815px;top:-6px;" width="22" height="17" viewBox="0 0 22 17"><rect x="1" y="0" width="12" height="13" fill="#6e6e6e"/><rect x="9.6" y="6.6" width="12" height="10" fill="#f2f2f2"/><rect x="10.6" y="7.6" width="4" height="3.6" fill="#389fd6"/><rect x="16" y="7.6" width="4" height="3.6" fill="#389fd6"/><rect x="10.6" y="12.4" width="4" height="3.6" fill="#389fd6"/><rect x="16" y="12.4" width="4" height="3.6" fill="#389fd6"/></svg>
<div style="left:1845px;top:0px;width:1px;height:13px;background:#d4d4d4;"></div>
<svg style="left:1855px;top:-8px;" width="18" height="16" viewBox="0 0 18 16"><rect x=".8" y=".8" width="16" height="14" fill="none" stroke="#6e6e6e" stroke-width="1.4"/><path d="M6 2l6 4-6 4z" fill="#59a869"/></svg>
<svg style="left:1881px;top:-7px;" width="20" height="18" viewBox="0 0 20 18"><circle cx="7" cy="5" r="6" fill="none" stroke="#6e6e6e" stroke-width="2"/><path d="M11.5 9.5l6.5 6.5" stroke="#6e6e6e" stroke-width="2.2"/></svg>
</div>
<span class="t" style="left:1886.0px;top:28.8px;font-size:19px;color:#6e6e6e;font-weight:700;font-style:italic;letter-spacing:-0.41px;">m</span>
<span class="t" style="left:1899.5px;top:53px;font-size:14px;color:#000;transform-origin:0 0;transform:rotate(90deg);">Maven</span>
<svg style="left:1886.5px;top:121px;" width="16" height="16" viewBox="0 0 16 16"><ellipse cx="7.5" cy="3" rx="7.4" ry="2.9" fill="#6e6e6e"/><path d="M.1 4.6c1 3 13.8 3 14.8 0v2.6c-1 3-13.8 3-14.8 0zM.1 8.4c1 3 13.8 3 14.8 0v2.6c-1 3-13.8 3-14.8 0zM.1 12.2c1 3 13.8 3 14.8 0v1c-1 3.4-13.8 3.4-14.8 0z" fill="#6e6e6e"/></svg>
<span class="t" style="left:1898.3px;top:141.8px;font-size:13.3px;color:#000;transform-origin:0 0;transform:rotate(90deg);">Database</span>
<span class="t" style="left:-7.5px;top:71.5px;font-size:14px;color:#000;transform-origin:0 0;transform:rotate(-90deg);">Project</span>
<div style="left:0px;top:82px;width:7.5px;height:9px;background:#6e6e6e;"></div>
<span class="t" style="left:-6.8px;top:775.5px;font-size:14.3px;color:#000;transform-origin:0 0;transform:rotate(-90deg);">Structure</span>
<div style="left:1px;top:782.4px;width:5.6px;height:5px;background:#6e6e6e;"></div>
<div style="left:1px;top:789.5px;width:5.6px;height:5px;background:#6e6e6e;"></div>
<span class="t" style="left:-6.8px;top:878.3px;font-size:13.8px;color:#000;transform-origin:0 0;transform:rotate(-90deg);">Favorites</span>
<svg style="left:-8px;top:883px;" width="16" height="16" viewBox="0 0 16 16"><path d="M8 0l2.4 5.4 5.6.6-4.2 3.9 1.2 5.7L8 12.7 3 15.6l1.2-5.7L0 6l5.6-.6z" fill="#6e6e6e"/></svg>
<svg style="left:-6px;top:947px;" width="15" height="14" viewBox="0 0 15 14"><rect x=".7" y=".7" width="13" height="12" fill="none" stroke="#6e6e6e" stroke-width="1.4"/></svg>
<div style="left:388px;top:534px;width:1px;height:33px;background:#f0f1f6;"></div>
<div style="left:763px;top:534px;width:1px;height:33px;background:#f0f1f6;"></div>
<div style="left:1138px;top:534px;width:1px;height:33px;background:#f0f1f6;"></div>
<div style="left:1513px;top:534px;width:1px;height:33px;background:#f0f1f6;"></div>
<span class="t" style="left:21.4px;top:544.3px;font-size:16px;color:#000;letter-spacing:-0.47px;">Run:</span>
<svg style="left:79px;top:543px;" width="16" height="15" viewBox="0 0 16 15"><path d="M6.8 0L0 7.4l6.8 7.4z" fill="#f0a98a"/><path d="M9 0l6.8 7.4L9 14.8z" fill="#9fd08c"/></svg>
<span class="t" style="left:102.3px;top:544.3px;font-size:16px;color:#000;letter-spacing:0.09px;">MyBatisTestor.testSelectByPriceRange</span>
<svg style="left:391px;top:546.5px;" width="10" height="10" viewBox="0 0 10 10"><path d="M1 1l8 8M9 1l-8 8" stroke="#adb3b8" stroke-width="1.1"/></svg>
<div style="left:63px;top:564.5px;width:352px;height:3.5px;background:#4083c9;"></div>
<svg style="left:1821px;top:541px;" width="20" height="20" viewBox="0 0 20 20"><g transform="translate(10 10)"><polygon points="-1.83,-5.32 -1.45,-7.46 1.45,-7.46 1.83,-5.32 3.69,-4.24 5.74,-4.99 7.19,-2.47 5.52,-1.07 5.52,1.07 7.19,2.47 5.74,4.99 3.69,4.24 1.83,5.32 1.45,7.46 -1.45,7.46 -1.83,5.32 -3.69,4.24 -5.74,4.99 -7.19,2.47 -5.52,1.07 -5.52,-1.07 -7.19,-2.47 -5.74,-4.99 -3.69,-4.24" fill="#757575" stroke="#757575" stroke-width="1.2" stroke-linejoin="round"/><circle r="3.04" fill="#e4e7ef"/></g></svg>
<div style="left:1856px;top:549.9px;width:15.6px;height:2.2px;background:#757575;"></div>
<svg style="left:26px;top:578px;" width="13" height="16" viewBox="0 0 13 16"><path d="M.2 .6l12 7.3-12 7.3z" fill="#59a869"/></svg>
<div style="left:55px;top:572px;width:27px;height:27px;background:#cfcfcf;border-radius:3px"></div>
<svg style="left:60px;top:578px;" width="17" height="15" viewBox="0 0 17 15"><path d="M1.6 7.8l4.8 4.6L15.4 3" fill="none" stroke="#6a6a6a" stroke-width="2.8"/></svg>
<div style="left:87.5px;top:572px;width:27px;height:27px;background:#cfcfcf;border-radius:3px"></div>
<svg style="left:92.5px;top:577px;" width="17" height="17" viewBox="0 0 17 17"><circle cx="8.5" cy="8.5" r="6.8" fill="none" stroke="#6a6a6a" stroke-width="2.1"/><path d="M3.8 13.2l9.4-9.4" stroke="#6a6a6a" stroke-width="2.1"/></svg>
<div style="left:121px;top:574px;width:1px;height:24px;background:#d4d4d4;"></div>
<svg style="left:132px;top:577px;" width="20" height="19" viewBox="0 0 20 19"><path d="M5.5 1v15M0.9000000000000004 11l4.6 5 4.6-5" fill="none" stroke="#6e6e6e" stroke-width="2.1"/></svg>
<span class="t" style="left:144.0px;top:574.8px;font-size:11.5px;color:#6e6e6e;font-weight:700;">a</span>
<span class="t" style="left:144.3px;top:584.5px;font-size:11.5px;color:#6e6e6e;font-weight:700;">z</span>
<svg style="left:166px;top:577px;" width="20" height="19" viewBox="0 0 20 19"><path d="M5.5 1v15M0.9000000000000004 11l4.6 5 4.6-5" fill="none" stroke="#6e6e6e" stroke-width="2.1"/><path d="M9.6 2.6h8.2M12.2 8h5.6M14.6 13h3.2" stroke="#757575" stroke-width="2.2"/></svg>
<div style="left:195px;top:574px;width:1px;height:24px;background:#d4d4d4;"></div>
<svg style="left:207px;top:576px;" width="18" height="20" viewBox="0 0 18 20"><path d="M1.5 2.4h15M1.5 17.6h15" stroke="#757575" stroke-width="2.4"/><path d="M9 5l4 4H5zM9 15l4-4H5z" fill="#757575"/></svg>
<svg style="left:240px;top:576px;" width="18" height="20" viewBox="0 0 18 20"><path d="M1.5 10h15" stroke="#757575" stroke-width="2.4"/><path d="M9 7l4.2-4.2H4.8zM9 13l4.2 4.2H4.8z" fill="#757575"/></svg>
<div style="left:269px;top:574px;width:1px;height:24px;background:#d4d4d4;"></div>
<svg style="left:283px;top:577px;" width="13" height="18" viewBox="0 0 13 18"><path d="M6.3 16.5v-15M1.7000000000000002 6.5l4.6-5 4.6 5" fill="none" stroke="#c8c8c8" stroke-width="2.1"/></svg>
<svg style="left:315.5px;top:577px;" width="13" height="18" viewBox="0 0 13 18"><path d="M6.3 1.5v15M1.7000000000000002 11.5l4.6 5 4.6-5" fill="none" stroke="#6e6e6e" stroke-width="2.1"/></svg>
<svg style="left:346px;top:576px;" width="22" height="22" viewBox="0 0 22 22"><circle cx="9" cy="9.6" r="7.4" fill="none" stroke="#6e6e6e" stroke-width="1.7"/><path d="M9 5v5l3.4 2.4" fill="none" stroke="#6e6e6e" stroke-width="1.6"/><path d="M13.4 16.6h6L16.4 20z" fill="#4d4d4d"/></svg>
<span class="t" style="left:400.6px;top:575.7px;font-size:15px;color:#6e6e6e;">»</span>
<svg style="left:420.7px;top:577px;" width="18" height="18" viewBox="0 0 18 18"><circle cx="9" cy="9" r="8.2" fill="#df5a62"/><path d="M9 4v5.8" stroke="#fff" stroke-width="2.2"/><circle cx="9" cy="13" r="1.3" fill="#fff"/></svg>
<span class="t" style="left:444.5px;top:578.1px;font-size:16px;color:#c7222d;letter-spacing:-0.07px;">Tests failed: 1</span>
<span class="t" style="left:541.3px;top:578.1px;font-size:16px;color:#8c8c8c;letter-spacing:0.03px;"> of 1 test – 241 ms</span>
<svg style="left:22px;top:608px;" width="22" height="20" viewBox="0 0 22 20"><path d="M.4 6.6l9 6-9 6z" fill="#59a869"/><circle cx="12.6" cy="8.2" r="6.6" fill="#db5860"/></svg>
<span class="t" style="left:30.6px;top:609.4px;font-size:13px;color:#fff;font-weight:700;">9</span>
<svg style="left:22px;top:641px;" width="18" height="20" viewBox="0 0 18 20"><path d="M3.5 7a6 6 0 0 1 10-2.6M14.5 13a6 6 0 0 1-10 2.6" fill="none" stroke="#6e6e6e" stroke-width="1.6"/><path d="M14.8 1.2v4.2h-4.2M3.2 18.8v-4.2h4.2" fill="none" stroke="#6e6e6e" stroke-width="1.4"/><rect x="1.5" y="8.2" width="4" height="3.6" fill="none" stroke="#6e6e6e" stroke-width="1.2"/><rect x="12.5" y="8.2" width="4" height="3.6" fill="none" stroke="#6e6e6e" stroke-width="1.2"/></svg>
<svg style="left:22px;top:674px;" width="18" height="18" viewBox="0 0 18 18"><path d="M2 16l8-8" stroke="#6e6e6e" stroke-width="3.4"/><path d="M12.4 1.2a4.8 4.8 0 1 0 4.4 4.4l-3 2.6-2.6-1.4-.4-3z" fill="#6e6e6e"/></svg>
<div style="left:19px;top:703px;width:24px;height:1px;background:#d4d4d4;"></div>
<div style="left:25px;top:719px;width:12.5px;height:12.5px;background:#c4c4c4;"></div>
<svg style="left:22px;top:749px;" width="19" height="16" viewBox="0 0 19 16"><path d="M0 3h5l1.5-3h6L14 3h5v13H0z" fill="#c4c4c4"/><circle cx="9.5" cy="9" r="3.6" fill="#f2f2f2"/><circle cx="9.5" cy="9" r="1.7" fill="#c4c4c4"/></svg>
<svg style="left:22px;top:782px;" width="19" height="18" viewBox="0 0 19 18"><ellipse cx="8" cy="8.5" rx="4.6" ry="6" fill="#c4c4c4"/><path d="M0 5h16M0 11h16M3 1l3 3M13 1l-3 3" stroke="#c4c4c4" stroke-width="1.6"/><path d="M11 10h7v7" fill="none" stroke="#f2f2f2" stroke-width="4"/><path d="M10.5 17.5l7-7M12.6 10.2h5.2v5.2" fill="none" stroke="#c4c4c4" stroke-width="1.6"/></svg>
<svg style="left:22px;top:813px;" width="18" height="18" viewBox="0 0 18 18"><path d="M5 1h12v16H5M5 1v3.4M5 17v-3.4" fill="none" stroke="#c4c4c4" stroke-width="1.6"/><path d="M0 9h11M7.4 5l4 4-4 4" fill="none" stroke="#c4c4c4" stroke-width="1.6"/></svg>
<div style="left:19px;top:842px;width:24px;height:1px;background:#d4d4d4;"></div>
<div style="left:23px;top:857px;width:9px;height:5.6px;background:#5a5a5a;"></div>
<div style="left:33px;top:857px;width:6.2px;height:5.6px;background:#5a5a5a;"></div>
<div style="left:23px;top:864.2px;width:16.2px;height:4.8px;background:#5a5a5a;"></div>
<div style="left:19px;top:883px;width:24px;height:1px;background:#d4d4d4;"></div>
<span class="t" style="left:26.6px;top:891.2px;font-size:15px;color:#6e6e6e;">»</span>
<div style="left:50px;top:603.6px;width:366px;height:25.2px;background:#d5d5d5;"></div>
<svg style="left:55.2px;top:612.5px;" width="13" height="9" viewBox="0 0 13 9"><path d="M1.2 1.6l5.3 5.3 5.3-5.3" fill="none" stroke="#6e6e6e" stroke-width="1.5"/></svg>
<svg style="left:77.6px;top:607.9px;" width="18" height="18" viewBox="0 0 18 18"><circle cx="9" cy="9" r="8.2" fill="#e47a7d"/><path d="M9 4v5.8" stroke="#fff" stroke-width="2.2"/><circle cx="9" cy="13" r="1.3" fill="#fff"/></svg>
<span class="t" style="left:101.6px;top:609.6px;font-size:16px;color:#000;letter-spacing:0.16px;">MyBatisTestor</span>
<span class="t" style="left:209.0px;top:609.6px;font-size:16px;color:#8c8c8c;letter-spacing:0.27px;">(com.imooc.mybatis)</span>
<span class="t" style="left:366.0px;top:611.1px;font-size:13.5px;color:#000;letter-spacing:0.17px;">241 ms</span>
<svg style="left:100.7px;top:632.5px;" width="18" height="18" viewBox="0 0 18 18"><circle cx="9" cy="9" r="8.2" fill="#e47a7d"/><path d="M9 4v5.8" stroke="#fff" stroke-width="2.2"/><circle cx="9" cy="13" r="1.3" fill="#fff"/></svg>
<span class="t" style="left:124.8px;top:634.8px;font-size:16px;color:#000;letter-spacing:-0.07px;">testSelectByPriceRange</span>
<span class="t" style="left:366.0px;top:636.3px;font-size:13.5px;color:#8c8c8c;letter-spacing:0.17px;">241 ms</span>
<div style="left:51px;top:901.5px;width:360.5px;height:10px;background:#e6e6e6;border:1px solid #dcdcdc;box-sizing:border-box"></div>
<div style="left:435.3px;top:604px;width:583.5px;height:28.7px;background:#edf6e9;"></div>
<div id="console" style="left:417px;top:603px;width:1426px;height:309px;overflow:hidden">
<pre class="e" style="left:17.5px;top:3.30px"><span style="color:#3c3c3c">"C:\Program Files\Java\jdk1.8.0_101\bin\java.exe" ...</span></pre>
<pre class="e" style="left:17.5px;top:60.80px">java.lang.NoClassDefFoundError: Could not initialize class com.imooc.mybatis.utils.MyBatisUtils</pre>
<pre class="e" style="left:17.5px;top:118.30px">    at com.imooc.mybatis.MyBatisTestor.testSelectByPriceRange(<a class="lk">MyBatisTestor.java:91</a>)</pre>
<pre class="e" style="left:17.5px;top:147.05px">    at sun.reflect.NativeMethodAccessorImpl.invoke0(<a class="lg">Native Method</a>)</pre>
<pre class="e" style="left:17.5px;top:175.80px">    at sun.reflect.NativeMethodAccessorImpl.invoke(<a class="lg">NativeMethodAccessorImpl.java:62</a>)</pre>
<pre class="e" style="left:17.5px;top:204.55px">    at sun.reflect.DelegatingMethodAccessorImpl.invoke(<a class="lg">DelegatingMethodAccessorImpl.java:43</a>)</pre>
<pre class="e" style="left:17.5px;top:233.30px">    at java.lang.reflect.Method.invoke(<a class="lg">Method.java:498</a>)</pre>
<pre class="e" style="left:17.5px;top:262.05px">    at org.junit.runners.model.FrameworkMethod$1.runReflectiveCall(<a class="lg">FrameworkMethod.java:50</a>)</pre>
<pre class="e" style="left:17.5px;top:290.80px">    at org.junit.internal.runners.model.ReflectiveCallable.run(<a class="lg">ReflectiveCallable.java:12</a>)</pre>
</div>
<svg style="left:419.5px;top:727px;" width="15" height="16" viewBox="0 0 15 16"><path d="M1 .7h12.4v9l-6.2 5.6-6.2-5.6z" fill="#fff" stroke="#c4c4c4" stroke-width="1.2"/><path d="M4 5.6h6.4" stroke="#b0b0b0" stroke-width="1.2"/></svg>
<div style="left:1831px;top:603px;width:12px;height:108px;background:#e6e6e6;"></div>
<svg style="left:1855px;top:613px;" width="13" height="18" viewBox="0 0 13 18"><path d="M6.5 16.5v-15M1.9000000000000004 6.5l4.6-5 4.6 5" fill="none" stroke="#6e6e6e" stroke-width="2.1"/></svg>
<svg style="left:1855px;top:646px;" width="13" height="18" viewBox="0 0 13 18"><path d="M6.5 1.5v15M1.9000000000000004 11.5l4.6 5 4.6-5" fill="none" stroke="#6e6e6e" stroke-width="2.1"/></svg>
<svg style="left:1852px;top:679px;" width="20" height="18" viewBox="0 0 20 18"><path d="M1 2h17M1 8h12.5a3.3 3.3 0 0 1 0 6.6H10" fill="none" stroke="#6e6e6e" stroke-width="1.7"/><path d="M12.4 11.6l-3 3 3 3" fill="none" stroke="#6e6e6e" stroke-width="1.5"/><path d="M1 14.6h2.4M5 14.6h2.4" stroke="#6e6e6e" stroke-width="1.7"/></svg>
<svg style="left:1852px;top:710px;" width="20" height="18" viewBox="0 0 20 18"><path d="M1 3h8M1 8.4h8M1 16.4h17" stroke="#6e6e6e" stroke-width="1.7"/><path d="M14 1v10M10.4 7.6l3.6 3.8 3.6-3.8" fill="none" stroke="#6e6e6e" stroke-width="1.7"/></svg>
<svg style="left:1852px;top:744px;" width="20" height="17" viewBox="0 0 20 17"><path d="M4 0h11v4H4zM0 5h19v8h-3v-3H3v3H0zM5 11.6h9V16H5z" fill="#6e6e6e"/></svg>
<svg style="left:1854px;top:775px;" width="16" height="19" viewBox="0 0 16 19"><path d="M5 0h6v2h4.6v2.6H.4V2H5zM1.6 6h12.8v12.6H1.6z" fill="#6e6e6e"/></svg>
<div style="left:12px;top:914px;width:68px;height:27.5px;background:#c6c6c6;"></div>
<svg style="left:25px;top:923px;" width="12" height="13" viewBox="0 0 12 13"><path d="M.6 .4l10.8 6-10.8 6z" fill="#6e6e6e"/></svg>
<span class="t" style="left:45.2px;top:922.8px;font-size:14px;color:#000;letter-spacing:-0.56px;">Run</span>
<svg style="left:94px;top:923px;" width="14" height="12" viewBox="0 0 14 12"><path d="M0 1.6h2.6M0 6h2.6M0 10.4h2.6" stroke="#6e6e6e" stroke-width="2.4"/><path d="M4.6 1.6h9M4.6 6h9M4.6 10.4h9" stroke="#6e6e6e" stroke-width="2.4"/></svg>
<span class="t" style="left:114.0px;top:922.8px;font-size:14px;color:#000;letter-spacing:-0.35px;">TODO</span>
<svg style="left:178px;top:921px;" width="15" height="15" viewBox="0 0 15 15"><circle cx="7.5" cy="7.5" r="7" fill="#6e6e6e"/><path d="M7.5 3.2v5.2" stroke="#f2f2f2" stroke-width="2"/><circle cx="7.5" cy="11.2" r="1.2" fill="#f2f2f2"/></svg>
<span class="t" style="left:199.0px;top:922.8px;font-size:14px;color:#000;letter-spacing:-0.24px;">Problems</span>
<svg style="left:283px;top:921.5px;" width="15" height="14" viewBox="0 0 15 14"><rect width="15" height="14" fill="#6e6e6e"/><path d="M2.6 3.4l3.4 3-3.4 3" fill="none" stroke="#f2f2f2" stroke-width="1.5"/><path d="M7.6 10.4h4.8" stroke="#f2f2f2" stroke-width="1.5"/></svg>
<span class="t" style="left:303.8px;top:922.8px;font-size:14px;color:#000;letter-spacing:-0.10px;">Terminal</span>
<svg style="left:379.5px;top:921px;" width="17" height="16" viewBox="0 0 17 16"><circle cx="7" cy="7" r="6" fill="none" stroke="#6e6e6e" stroke-width="1.5"/><path d="M7 3.4V7l2.6 1" fill="none" stroke="#6e6e6e" stroke-width="1.3"/><path d="M7.6 5.6v10.4l8.4-5.2z" fill="#f2f2f2"/><path d="M9.2 8v7l6-3.5z" fill="#6e6e6e"/></svg>
<span class="t" style="left:401.2px;top:922.8px;font-size:14px;color:#000;letter-spacing:-0.04px;">Profiler</span>
<svg style="left:470px;top:920.5px;" width="16" height="16" viewBox="0 0 16 16"><path d="M5.6 4.6l9 9" stroke="#6e6e6e" stroke-width="2.6"/><path d="M.6 5.4L5.8 .4l4.6 4-3 3.2-2.2-2-2.4 2z" fill="#6e6e6e"/></svg>
<span class="t" style="left:490.8px;top:922.8px;font-size:14px;color:#000;letter-spacing:-0.17px;">Build</span>
<svg style="left:1785px;top:921px;" width="16" height="16.4" viewBox="0 0 16 16.4"><path d="M8 0a8 8 0 0 1 8 8v8.2H8A8 8 0 0 1 8 0z" fill="#e05561"/></svg>
<span class="t" style="left:1789.6px;top:922.6px;font-size:12px;color:#fff;font-weight:700;">1</span>
<span class="t" style="left:1806.0px;top:922.8px;font-size:14px;color:#000;letter-spacing:-0.28px;">Event Log</span>
<span class="t" style="left:20.2px;top:947.6px;font-size:16px;color:#000;letter-spacing:0.04px;">Tests failed: 1, passed: 0 (moments ago)</span>
<span class="t" style="left:1615.3px;top:947.5px;font-size:15.4px;color:#000;letter-spacing:0.18px;">5:85</span>
<span class="t" style="left:1661.5px;top:947.5px;font-size:15.4px;color:#000;letter-spacing:-0.80px;">CRLF</span>
<span class="t" style="left:1712.0px;top:947.5px;font-size:15.4px;color:#000;letter-spacing:-0.12px;">UTF-8</span>
<span class="t" style="left:1770.0px;top:947.5px;font-size:15.4px;color:#000;letter-spacing:0.05px;">4 spaces</span>
<svg style="left:1846px;top:947px;" width="15" height="15" viewBox="0 0 15 15"><path d="M2 8V4.4a3.4 3.4 0 0 1 6.6-1" fill="none" stroke="#6e6e6e" stroke-width="1.6"/><rect x="5" y="7" width="9" height="7" fill="#6e6e6e"/></svg>
<svg style="left:1874px;top:947px;" width="22" height="18" viewBox="0 0 22 18"><path d="M4.6 14.6a4.6 4.6 0 0 1 .6-9.2 6.4 6.4 0 0 1 12.2 1.4 4 4 0 0 1 .2 7.8z" fill="#6e6e6e"/><circle cx="15.6" cy="15" r="3.6" fill="#f2f2f2"/><circle cx="15.6" cy="15" r="2.2" fill="none" stroke="#6e6e6e" stroke-width="1.4"/></svg>
<span class="t" style="left:1881.5px;top:948.5px;font-size:11px;color:#f2f2f2;font-weight:700;">?</span>
<svg style="left:1894px;top:900px;" width="12" height="66" viewBox="0 0 12 66"><rect x="1.6" y="1.6" width="8.8" height="70" rx="4.4" fill="#fff" stroke="#6e6e6e" stroke-width="1.8"/><rect x="4.2" y="41" width="3.8" height="22" rx="1.6" fill="#27c24c"/></svg>
</div></body></html>
